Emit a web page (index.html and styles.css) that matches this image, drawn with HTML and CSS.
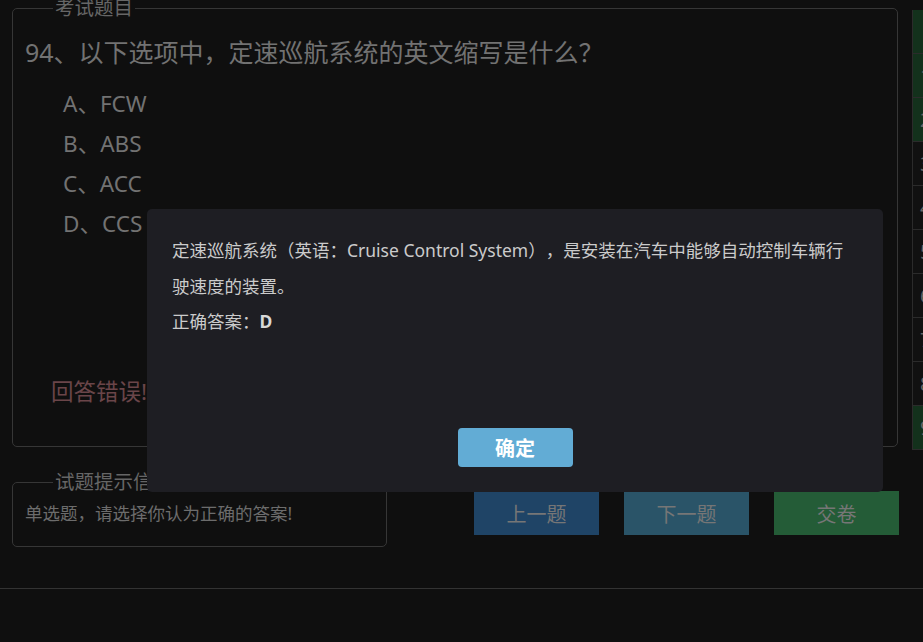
FILE: index.html
```html
<!DOCTYPE html>
<html lang="zh">
<head>
<meta charset="utf-8">
<title>考试</title>
<link rel="stylesheet" href="styles.css">
</head>
<body>
<div class="main">
  <div class="left">
    <fieldset class="box box-question">
      <legend class="legend">考试题目</legend>
      <div class="title">94、以下选项中，定速巡航系统的英文缩写是什么？</div>
      <ul class="options">
        <li>A、FCW</li>
        <li>B、ABS</li>
        <li>C、ACC</li>
        <li>D、CCS</li>
      </ul>
      <div class="result">回答错误!</div>
    </fieldset>
    <div class="bottom-row">
      <fieldset class="box box-hint">
        <legend class="legend">试题提示信息</legend>
        <div class="hint">单选题，请选择你认为正确的答案!</div>
      </fieldset>
      <div class="btns">
        <button class="btn btn-prev">上一题</button>
        <button class="btn btn-next">下一题</button>
        <button class="btn btn-submit">交卷</button>
      </div>
    </div>
  </div>
  <div class="card">
    <div class="cell done"></div>
    <div class="cell done">1</div>
    <div class="cell done">2</div>
    <div class="cell">3</div>
    <div class="cell">4</div>
    <div class="cell">5</div>
    <div class="cell">6</div>
    <div class="cell">7</div>
    <div class="cell">8</div>
    <div class="cell done">9</div>
  </div>
</div>
<div class="footer"></div>

<div class="modal">
  <div class="modal-text">
    <p>定速巡航系统（英语：Cruise Control System），是安装在汽车中能够自动控制车辆行驶速度的装置。</p>
    <p>正确答案：<b>D</b></p>
  </div>
  <button class="modal-btn">确定</button>
</div>
</body>
</html>
```

FILE: styles.css
```css
html, body {
  margin: 0;
  padding: 0;
  background: #0f0f0f;
  overflow: hidden;
  height: 642px;
}
body {
  font-family: "Noto Sans", "Noto Sans CJK SC", sans-serif;
  color: #707070;
  text-spacing-trim: space-all;
}
.main {
  display: flex;
  align-items: flex-start;
}
.left {
  width: 887px;
  margin-left: 12px;
  flex: none;
}
.box {
  margin: 0;
  border: 1px solid #363636;
  border-radius: 5px;
  min-width: 0;
}
.legend {
  margin-left: 28px;
  padding: 0 2px;
  font-size: 19.5px;
  line-height: 16px;
  color: #666;
}
.box-question {
  width: 886px;
  box-sizing: border-box;
  padding: 18px 12px 34px 12px;
}
.title {
  font-size: 25px;
  line-height: 36px;
  color: #727272;
}
.options {
  list-style: none;
  margin: 14px 0 0 38px;
  padding: 0;
}
.options li {
  font-size: 22.5px;
  line-height: 40px;
  color: #727272;
}
.result {
  margin: 128px 0 0 26px;
  font-size: 22.5px;
  line-height: 40px;
  color: #6a4549;
}
.bottom-row {
  display: flex;
  justify-content: space-between;
  align-items: flex-start;
  margin-top: 27px;
}
.box-hint {
  width: 375px;
  box-sizing: border-box;
  padding: 10px 12px 20px 12px;
}
.hint {
  font-size: 17.5px;
  line-height: 26px;
  color: #6c6c6c;
}
.btns {
  display: flex;
  gap: 25px;
  margin-top: 17px;
}
.btn {
  width: 125px;
  height: 44px;
  border: none;
  padding: 0;
  font-family: inherit;
  font-size: 20px;
  color: #767676;
}
.btn-prev { background: #1f4466; }
.btn-next { background: #2a5468; }
.btn-submit { background: #245c37; }
.card {
  margin-left: 13px;
  padding-top: 10px;
  width: 60px;
  flex: none;
}
.cell {
  height: 43px;
  border-bottom: 1px solid #2b2b2b;
  border-left: 1px solid #2b2b2b;
  box-sizing: content-box;
  padding-left: 7px;
  font-size: 20px;
  line-height: 43px;
  color: #666;
  background: #111;
  white-space: nowrap;
}
.cell.done {
  background: #13311c;
}
.footer {
  margin-top: 41px;
  border-top: 1px solid #333;
}
.modal {
  position: fixed;
  left: 147px;
  top: 209px;
  width: 736px;
  height: 283px;
  box-sizing: border-box;
  padding: 24px 25px 25px 25px;
  background: #1e1e23;
  border-radius: 5px;
  display: flex;
  flex-direction: column;
}
.modal-text {
  color: #cbcbcb;
  font-size: 17.5px;
  line-height: 35.5px;
}
.modal-text p {
  margin: 0;
}
.modal-text b {
  color: #d8d8d8;
}
.modal-btn {
  margin: auto auto 0 auto;
  width: 115px;
  height: 39px;
  border: none;
  border-radius: 4px;
  background: #62acd5;
  color: #fff;
  font-family: inherit;
  font-size: 20px;
  font-weight: bold;
}
```
